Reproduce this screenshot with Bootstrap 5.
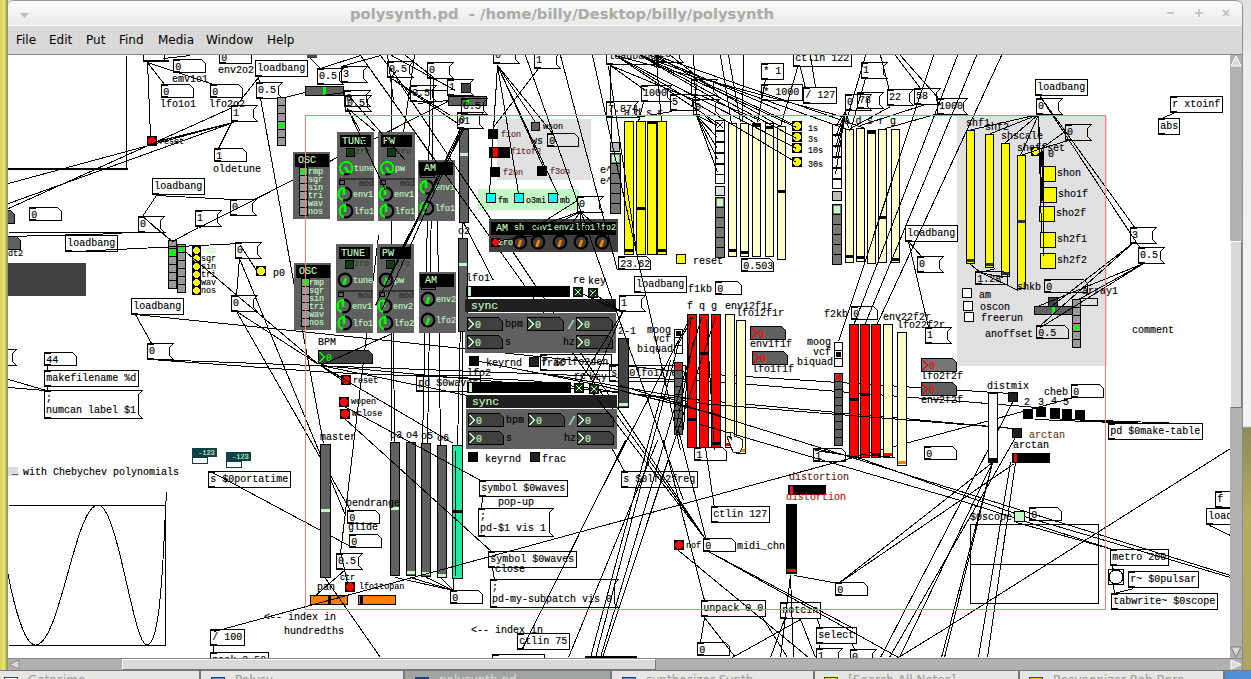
<!DOCTYPE html>
<html lang="en">
<head>
<meta charset="utf-8">
<title>polysynth.pd</title>
<link href="https://cdn.jsdelivr.net/npm/bootstrap@5.3.0/dist/css/bootstrap.min.css" rel="stylesheet">
<style>
html,body{height:100%;overflow:hidden}
body{font-family:"DejaVu Sans",sans-serif;background:#dcdcda}
.desk{height:679px;width:1251px}
.edge-l{width:8px;background:linear-gradient(90deg,#d9d05c,#ebe672 55%,#a49d4a 85%,#8d8d8d)}
.edge-r{width:8px;background:linear-gradient(#e2e2e2 0 35px,#eee 60px,#f4f4f4 426px,#8f8a58 428px,#b5ad62 520px,#aca661)}
.pdwin{width:1235px;height:670px;border-right:1px solid #8c8c8c;border-radius:7px 7px 0 0;background:#dadada}
.titlebar{height:26px;background:linear-gradient(#fbfbfb,#e9e9e7);border-radius:6px 6px 0 0;border-top:1px solid #999;border-bottom:1px solid #fff;color:#aaaaa7}
.titletext{font-size:14.76px;line-height:20px;font-weight:bold;white-space:pre;width:426px;padding-top:1px}
.titleside{width:334px}
.menus{height:29px;background:#d9d9d9;border-bottom:1px solid #888;font-size:12px;color:#000;padding-left:8px}
.patch{display:block;width:1222px;height:603px;background:#fff;flex:none}
.vbar{width:12px;background:#b1b1b1}
.hbar{height:12px;background:#b1b1b1;border-top:1px solid #888}
.thumb{background:#d9d9d9;border:1px solid #777;border-top-color:#fff;border-left-color:#fff}
.tasks{height:9px;font-size:12px;line-height:19px;color:#999;background:#e6e6e4;border-top:1px solid #777}
.task{border-right:2px solid #777;padding-left:10px;height:8px;overflow:hidden;flex:none;white-space:pre}
.task i{display:inline-block;width:14px;height:10px;background:#5b8fcc;border:1px solid #246;margin-right:10px;vertical-align:-3px}
svg text{font-family:"Liberation Mono",monospace;font-size:10px;white-space:pre}
</style>
</head>
<body>
<div class="desk d-flex flex-column">
 <div class="d-flex">
  <div class="edge-l"></div>
  <div class="pdwin d-flex flex-column">
   <div class="titlebar d-flex align-items-center px-2">
    <div class="titleside"><svg width="60" height="20"><path d="M4 9h9l-4.500 5z" fill="#bbb"/></svg></div>
    <span class="titletext">polysynth.pd  - /home/billy/Desktop/billy/polysynth</span>
    <svg class="ms-auto" width="72" height="20" stroke="#bbb" stroke-width="1.500"><path d="M5 10h7M33 10h8M37 6v8M61 7l6 6M67 7l-6 6" fill="none"/></svg>
   </div>
   <div class="menus d-flex align-items-center"><span style="width:33px">File</span><span style="width:37px">Edit</span><span style="width:33px">Put</span><span style="width:39px">Find</span><span style="width:48px">Media</span><span style="width:61px">Window</span><span>Help</span></div>
   <div class="d-flex">
    <svg class="patch" id="patch" viewBox="8 55 1222 603"></svg>
    <div class="vbar d-flex flex-column"><svg width="12" height="12"><path d="M1 11L6 1l5 10z" fill="#d9d9d9" stroke="#fff"/></svg><div style="height:174px"></div><div class="thumb" style="height:167px"></div><div class="flex-grow-1"></div><svg width="12" height="12"><path d="M1 1h10L6 11z" fill="#d9d9d9" stroke="#777"/></svg></div>
   </div>
   <div class="hbar d-flex"><svg width="12" height="11"><path d="M11 1v9L1 5.500z" fill="#d9d9d9" stroke="#888"/></svg><div style="width:102px"></div><div class="thumb" style="width:534px"></div><div class="flex-grow-1"></div><svg width="12" height="11"><path d="M1 1v9l10-4.500z" fill="#d9d9d9" stroke="#fff"/></svg></div>
  </div>
  <div class="edge-r"></div>
 </div>
 <div class="tasks d-flex"><div class="task" style="width:201px;padding-left:4px"><i style="background:#fff"></i>Gatosimo</div><div class="task" style="width:204px"><i></i>Polysy</div><div class="task" style="width:207px;background:#a1a5a1;color:#ddd"><i style="background:#248"></i>polysynth.pd</div><div class="task" style="width:203px"><i></i>synthesizer Synth...</div><div class="task" style="width:205px;padding-left:9px"><i style="background:#ecd96a"></i>[Search All Notes]</div><div class="task" style="width:205px;padding-left:9px"><i style="background:#efcb20"></i>Resynonizer Rob Bpro</div><div style="width:26px;background:#4f90d8"></div></div>
</div>
<script>
const K='#000',G='#c3f7c3',D='#606060',L='#0f0',Y='#fafa00',C='#ffffc8',R='#f00';
let out='';
const esc=s=>String(s).replace(/&/g,'&amp;').replace(/</g,'&lt;');
const rect=(x,y,w,h,f='none',s=K)=>out+=`<rect x="${x+.5}" y="${y+.5}" width="${w}" height="${h}" fill="${f}" stroke="${s}"/>`;
const fill=(x,y,w,h,f)=>out+=`<rect x="${x}" y="${y}" width="${w}" height="${h}" fill="${f}"/>`;
const text=(x,y,s,f=K,z=10)=>out+=`<text x="${x}" y="${y}" fill="${f}" stroke="${f}" stroke-width=".15" style="font-size:${z}px">${esc(s)}</text>`;
const small=(x,y,s,f=K)=>text(x,y,s,f,8.4);
const path=(d,f='none',s=K,w=1)=>out+=`<path d="${d}" fill="${f}" stroke="${s}" stroke-width="${w}"/>`;
const lines=s=>s.trim().split(/\s*;\s*/).filter(Boolean).forEach(l=>path('M'+l.trim().split(' ').map(p=>p.split(',').map(v=>+v+.5).join(' ')).join('L')));
// start an edge fan at one outlet
const fan=(a,s)=>lines(s.split(' ').map(p=>a+' '+p).join(';'));
const ticks=(x,y,h,top=true)=>{if(top)fill(x,y,7,2,K);fill(x,y+h-1,7,2,K)};
const obj=(x,y,w,s)=>{rect(x,y,w,16);ticks(x,y,16,s!='loadbang');text(x+2.3,y+11,s)};
const msg=(x,y,w,s,h=16)=>{path(`M${x+.5} ${y+.5}h${w}l-4 4v${h-8}l4 4h${-w}z`);ticks(x,y,h);s.split('\n').forEach((t,i)=>text(x+2,y+11+i*12,t))};
const num=(x,y,w,s,f='none',c=K)=>{path(`M${x+.5} ${y+.5}h${w-4}l4 4v9h${-w}z`,f);if(f=='none'){ticks(x,y,13);text(x+2.3,y+11,s)}else{path(`M${x+1.5} ${y+2}l5 5l-5 5`,'none',c);text(x+8,y+10.500,s,c)}};
const tgl=(x,y,z,f,inner)=>{rect(x,y,z,z,f);if(inner=='x')path(`M${x+2} ${y+2}l${z-3} ${z-3}m0 ${3-z}l${3-z} ${z-3}`,'none',G)};
const bang=(x,y,z,f)=>{rect(x,y,z,z,K);out+=`<circle cx="${x+z/2+.5}" cy="${y+z/2+.5}" r="${z/2-.6}" fill="${f}"/>`};
const radio=(x,y,w,h,n,on,f,c=L,pad=2)=>{for(let i=0;i<n;i++)rect(x,y+i*h,w,h,f);fill(x+pad,y+on*h+pad,w-2*pad+1,h-2*pad+1,c)};
const vs=(x,y,w,h,f,m,c=K,t=3)=>{rect(x,y,w,h,f);if(m)fill(x+1,m,w-1,t,c)};
const hs=(x,y,w,h,f,m,c,t=3)=>{rect(x,y,w,h,f);fill(m,y+1,t,h-1,c)};
// dial: black ring, value arc (1 = half turn, 2 = nearly full) and a pointer
const knob=(x,y,c,full)=>{out+=`<g shape-rendering="auto" fill="none"><circle cx="${x}" cy="${y}" r="6.300" stroke="#000" stroke-width="2.200"/>`;
if(full==1)out+=`<path d="M${x-2} ${y+6}A6.300 6.300 0 0 1 ${x} ${y-6.3}" stroke="${c}" stroke-width="2.600"/>`;
if(full==2)out+=`<path d="M${x-2} ${y+6}A6.300 6.300 0 1 1 ${x+4} ${y+5}" stroke="${c}" stroke-width="2.300"/>`;
out+=`<path d="${full==2?`M${x-1} ${y-1}L${x+3} ${y+5}`:full==1?`M${x-1} ${y-5}V${y+1}`:`M${x+1} ${y-2}L${x-1.500} ${y+5}`}" stroke="${c}" stroke-width="2.600"/></g>`};
const osc=(x,y,rx)=>{fill(x,y,37,67,D);fill(x+2,y+2,34,13,K);text(x+5,y+11,'OSC',G);radio(rx,y+15,8,8,6,0,'#999');['rmp','sqr','sin','tri','wav','nos'].forEach((s,i)=>small(x+15,y+22+i*8,s,G))};
const mod=(x,y,name,labels)=>{const up=y<200;fill(x,y,37,89,D);fill(x+3,y+3,31,12,K);text(x+5,y+12,name,G);rect(x+9,y+16,8,8,'#123c12');small(x+18,y+22,'zro','#204a20');knob(x+9,y+36,L,up?2:0);small(x+17,y+39,labels[0],G);fill(x+2,y+46,35,2,'#333');rect(x+2,y+48,5,4,D);small(x+22,y+54,'mod','#282828');knob(x+8,y+62,L,1);small(x+16,y+65,labels[1],G);knob(x+9,y+79,L,1);small(x+17,y+82,labels[2],G)};
const am=(x,y,a,b)=>{fill(x,y,37,61,D);fill(x+1,y+2,34,13,K);text(x+6,y+11,'AM',G);rect(x+2,y+15,14,2,D);knob(x+9,y+27,L,y<200?1:0);small(x+17,y+30,a,G);knob(x+9,y+48,L,y<200?1:0);small(x+17,y+51,b,G)};

// grey and green backdrops
fill(957,116,150,250,'#e0e0e0');fill(497,119,94,61,'#e0e0e0');fill(478,189,101,21,G);
fill(8,263,78,33,'#404040');
// wires that run beneath the panels
lines(`360,55 433,158;391,78 391,440;414,55 403,132;387,55 393,100;430,78 422,443;433,78 427,443;437,215 440,445;378,235 340,553;260,98 302,330 323,443;462,240 457,445;393,333 394,442;347,108 360,131;347,108 375,131;199,227 455,97;391,55 455,90;405,55 437,80`);
// left
lines('126,55 126,169');fill(8,168,120,2,K);fill(143,60,26,2,K);rect(143,50,21,10);
num(173,59,32,'0');text(172,82,'emv1o1');num(219,50,32,'0');text(218,73,'env2o2');obj(255,60,52,'loadbang');
num(161,84,32,'0');text(160,107,'lfo1o1');num(210,84,32,'0');text(209,107,'lfo2o2');msg(256,82,26,'0.5');msg(231,105,26,'1');
num(214,148,32,'1');text(213,172,'oldetune');radio(277,97,8,8,6,3,'#999');bang(147,136,9,R);small(159,144,'reset');
obj(152,178,52,'loadbang');num(29,207,32,'0');msg(230,199,26,'0');msg(195,210,26,'1');msg(138,216,26,'0');
num(-12,210,26,'',D);num(-12,236,32,'',D);small(8,256,'dt2');obj(65,235,52,'loadbang');
radio(168,240,8,8,6,1,'#999');radio(177,244,8,8,6,0,'#999');
['rmp','sqr','sin','tri','wav','nos'].forEach((s,i)=>{bang(192,246+i*8,8,Y);small(201,253+i*8,s,i?K:G)});
msg(235,242,26,'0');bang(256,266,9,Y);text(273,276,'p0');msg(231,295,26,'0');obj(131,298,52,'loadbang');msg(147,343,26,'0');
msg(-10,349,26,'');num(44,352,32,'44');obj(44,370,94,'makefilename %d');msg(44,390,98,';\nnumcan label $1',28);
fill(192,448,25,9,'#104048');text(198,455,'-123',G,7);rect(192,457,15,6,'#fff','#104048');fill(226,452,25,9,'#104048');text(232,459,'-123',G,7);rect(226,461,15,6,'#fff','#104048');
fill(8,467,10,9,'#ddd');text(12,474,'_');text(23,475,'with Chebychev polynomials');obj(208,471,82,'s $0portatime');
lines('8,505 165,505 165,645 8,645');
path('M8 574C15 610 25 645 35.500 645C60 645 75 505 98 505C118 505 133 645 147 645C158 645 162 590 165 520L166.500 492');
lines(`8,183 233,122 8,203;8,208 232,107;157,141 233,122;147,61 150,136;147,62 164,84;147,62 213,84;163,58 190,55;258,77 236,105;231,122 218,148;258,77 259,82;285,97 320,88;156,195 142,216;156,195 233,199;142,216 172,241;152,225 172,241;198,227 172,241;8,232 165,232;8,236 122,233;75,251 240,243;239,258 236,295;239,258 345,515;236,311 350,510;236,311 318,364;186,252 318,364;240,245 256,270;135,314 151,343;135,314 310,332 698,373 1010,393;150,359 530,373 700,380 1037,407;150,359 330,372 530,380 720,405;8,379 46,390;8,387 44,390;47,365 47,370;47,386 47,390;212,472 350,546`);
// oscillator modules
osc(293,152,299);mod(337,132,'TUNE',['tune','env1','lfo1']);mod(378,132,'PW',['pw','env1','lfo1']);am(418,160,'env1','lfo1');
osc(294,263,301);mod(336,244,'TUNE',['tune','env1','lfo1']);mod(377,244,'PW',['pw','env2','lfo2']);am(419,272,'env2','lfo2');
fill(307,50,10,8,'#444');msg(317,68,26,'0.5');msg(341,66,26,'3');hs(305,86,38,9,D,323,L);msg(344,90,26,'0');msg(345,95,26,'0.5');
msg(387,61,26,'0.5');msg(427,62,26,'0');msg(410,85,26,'0.5');msg(447,79,26,'1');tgl(461,83,9,'#444');hs(448,96,38,9,D,466,L);msg(461,98,26,'0.5');msg(457,112,26,'0');text(458,124,'o1');
vs(459,129,9,93,D,153,G);text(458,234,'o2');vs(458,238,9,93,D,263,G);msg(493,47,26,'0');msg(534,52,26,'1');
text(318,345,'BPM');num(318,350,54,'0','#404040',L);
bang(341,375,9,R);small(353,383,'reset');bang(339,397,9,R);small(351,404,'wopen');bang(340,409,9,R);small(352,416,'wclose');obj(416,375,64,'pd $0waves');
text(320,440,'master');vs(320,444,10,133,D,509,G);
vs(390,442,9,133,D,507,G);vs(406,442,9,133,D,571,G);vs(421,443,9,133,D,572,G);vs(437,445,9,132,D,574,G);vs(452,445,10,133,'#20eaa8',510,K);
text(390,438,'o3');text(406,438,'o4');text(421,439,'o5');text(437,441,'o6');
text(346,506,'bendrange');num(347,510,32,'0');text(348,530,'glide');num(349,534,32,'0');msg(336,553,26,'0.5');small(340,580,'ctr');bang(345,582,9,R);small(359,589,'lfo1topan');text(317,590,'pan');
hs(310,595,37,9,'#ff8000',328,K);hs(358,595,37,9,'#ff8000',360,K);num(450,590,32,'0');
text(264,620,'<-- index in');text(284,634,'hundredths');obj(210,629,34,'/ 100');obj(210,652,58,'pack 0 50');lines('213,645 213,652');
lines(`310,58 320,68 360,55;341,66 380,55;348,95 405,160;347,108 385,190;391,78 460,125;391,78 450,115;410,95 380,55;415,90 447,90;320,95 345,92;396,78 706,540;360,55 706,540;396,70 390,78;460,128 375,305;462,128 381,310;464,128 396,258;458,135 388,280;462,222 462,238;463,222 493,280;418,103 448,100;325,578 380,657;345,569 314,596;341,555 347,583`);
fan('320,365','392,333 345,379 467,395 453,443 345,382 1013,428');lines('344,406 482,481;344,418 492,552;214,631 1037,407;462,330 462,445;455,450 455,575');
fan('453,590','395,577 410,577 426,577 441,578 453,578');
// filter switches
const br='#5b2b2b';tgl(488,129,9,K);small(501,137,'f1on',br);hs(489,147,20,10,K,493,R,5);small(511,154,'f1tof2',br);tgl(490,167,9,K);small(503,175,'f2on',br);tgl(537,166,9,K);small(550,174,'f3on',br);tgl(531,122,8,D);small(543,129,'wson');text(531,144,'ws');num(547,133,31,'0');
[[486,'fm'],[514,'o3mi'],[548,'mb']].forEach(([x,s])=>{tgl(x,193,9,'#00ffff');small(x+12,203,s)});msg(577,196,26,'0');
fill(489,219,129,33,'#404040');fill(491,222,125,13,K);text(496,231,'AM',G);small(514,230,'sh',G);small(532,230,'env1',G);small(554,230,'env2',G);small(575,230,'lfo1',G);small(596,230,'lfo2',G);
[520,538,560,581,602].forEach(x=>knob(x,242,'#ff8000',0));bang(491,238,8,R);small(498,245,'zro',G);
text(466,281,'lfo1');
[[466,286],[467,382]].forEach(([x,y],i)=>{hs(x,y,103,10,K,x+2,G);fill(x-1,y+13,151,13,'#202020');text(x+5,y+23,'sync',G,11.3);fill(x-1,y+27,151,40,D);
[[1,31,35],[61,31,36],[110,31,36],[1,49,35],[110,49,36]].forEach(([a,b,w])=>num(x+a,y+b,w,'0','#404040',G));text(x+39,y+41,'bpm');text(x+101,y+43,'/',G,13);text(x+39,y+59,'s');text(x+97,y+59,'hz');
text(x+107,y-3,'re');text(x+122,y-2,'key');tgl(x+107,y+1,9,'#133313','x');tgl(x+122,y+2,9,'#133313','x')});
tgl(469,356,9,K);text(486,366,'keyrnd');tgl(529,357,9,'#222');text(541,366,'frac');text(467,376,'lfo2');tgl(468,452,9,K);text(485,462,'keyrnd');tgl(530,452,9,'#222');text(542,462,'frac');
obj(540,354,71,'r $0lfo2den');obj(609,365,76,'s $0lfo1freq');text(618,334,'2-1');vs(618,338,10,69,'#444',403,G);msg(619,295,26,'1');obj(634,276,52,'loadbang');
// envelope sliders
vs(624,121,9,133,Y,249);vs(636,121,9,133,Y,207);vs(647,121,9,133,Y,121);vs(657,121,9,133,Y,249);['a','d','s','r'].forEach((s,i)=>text(624+i*11,116,s));
text(600,173,'e^2');text(600,184,'e^4');tgl(610,142,9,'#bbb');radio(610,153,10,10,6,0,'#777',G);num(618,256,32,'23.62');tgl(676,254,9,Y);text(693,264,'reset');
obj(606,48,52,'loadbang');msg(657,46,26,'20');msg(641,85,30,'1000');msg(670,94,26,'5');msg(606,101,32,'7.874');msg(691,79,26,'1');msg(693,99,26,'0');
for(let i=0;i<5;i++){rect(715,120+i*11,9,10,'#fff');rect(832,124+i*11,9,10,'#fff')}path('M717 122l6 6m0-6l-6 6');tgl(715,174,9,'#fff');tgl(715,186,9,'#ddd');radio(715,197,9,10,6,0,'#777',G);tgl(832,179,9,'#fff');tgl(832,191,9,'#bbb');radio(832,204,9,10,6,0,'#777',G);
[[728,123,249],[740,123,251],[752,123,124],[765,123,126],[777,126,190],[845,129,255],[856,128,256],[867,130,131],[878,129,216],[891,129,258]].forEach(([x,y,m])=>vs(x,y,8,133,C,m));
[[121,'1s'],[132,'3s'],[143,'10s'],[157,'30s']].forEach(([y,s])=>{bang(792,y,9,Y);small(808,y+10,s)});
['a','d','s','r','g'].forEach((s,i)=>text(844+i*11.500,124,s));
obj(761,63,22,'* 1');obj(761,84,41,'* 1000');obj(803,87,33,'/ 127');obj(793,50,58,'ctlin 122');msg(861,62,26,'1');msg(845,94,26,'0');msg(857,92,26,'78');msg(887,89,26,'22');msg(914,88,26,'58');msg(937,98,30,'1000');
num(741,258,32,'0.503');obj(905,225,52,'loadbang');msg(917,256,26,'0');
text(688,292,'f1kb');num(715,281,26,'0');text(824,317,'f2kb');num(851,306,26,'0');
text(647,333,'moog');text(653,342,'vcf');text(637,352,'biquad');radio(674,329,8,8,3,0,'#fff',K);radio(674,362,8,8,9,0,D,R);
['f','q','g'].forEach((s,i)=>{text(687+i*12,309,s);vs(687+i*12,314,9,133,R,[418,352,442][i])});vs(725,314,9,133,C,443,R);vs(736,320,9,133,C,449,'#ff8000');text(725,309,'env12f1r');text(736,316,'lfo12f1r');
num(750,326,35,'0',D,R);text(750,347,'env1f1f');num(752,351,35,'0',D,R);text(752,372,'lfo1f1f');
text(807,345,'moog');text(813,355,'vcf');text(797,365,'biquad');radio(834,342,8,8,3,1,'#fff',K);radio(834,373,8,8,9,0,D,R);
[0,1,2].forEach(i=>vs(849+i*11,324,9,133,R,[398,393,453][i]));vs(883,324,9,133,C,453,R);vs(897,332,9,133,C,461,'#ff8000');text(883,320,'env22f2r');text(897,328,'lfo22f2r');
num(813,448,32,'1');num(694,447,32,'1');num(921,358,35,'0','#777',R);text(921,379,'lfo2f2f');num(921,382,35,'0',D,R);text(921,403,'env2f2f');msg(925,327,26,'1');num(924,446,32,'0');
fan('497,65','493,130 489,193 518,193 543,167 535,122 553,134 558,195');
fan('580,211','520,232 540,232 565,232 581,232 602,232');
lines('538,68 492,128;577,200 537,225;500,240 535,235');
fan('610,65','611,142 645,90 695,100');
fan('640,55','757,124 796,127 796,138 850,130');fan('615,55','796,148 796,162 719,124 845,117');fan('655,55','780,126 865,128');
fan('696,115','717,125 717,137 717,148 717,159 717,172');fan('845,111','835,126 835,137 835,148 835,159 835,174 848,128');
lines(`525,55 683,500;560,55 617,270;592,55 680,450;608,66 636,250;655,50 661,121;643,102 638,121;635,117 672,111;693,55 696,115;693,95 696,99;670,55 715,90;650,55 780,110;700,80 793,124;700,95 760,120;933,55 838,341;957,55 853,325;976,55 864,325;1001,55 876,325;908,241 921,256;908,241 928,327;865,78 850,130;925,104 860,125;938,113 885,128;800,67 805,88;797,67 780,126;765,79 757,122;720,55 731,123;743,55 742,122;728,55 740,122;895,55 920,88;880,55 889,90;900,55 940,100;865,55 846,120;810,55 815,87;704,115 715,125;890,106 850,128`);
fan('622,312','578,383 592,383 579,292 593,293');
lines(`469,359 600,385 720,415;543,373 700,400;690,317 603,485;678,343 595,657;701,317 600,657;715,317 602,657;670,360 590,657;690,320 683,430;706,320 714,450;678,343 692,317;625,440 522,648;657,440 568,657;592,392 706,540;612,449 624,471;693,340 675,430;663,440 704,600;678,430 706,540;705,447 714,508;700,403 1013,428;620,385 1230,575;700,424 960,500 1112,549;818,449 860,458 1020,515 1230,577;815,450 860,457;860,454 895,457`);
// lower centre
obj(479,480,88,'symbol $0waves');text(498,505,'pop-up');msg(478,508,75,';\npd-$1 vis 1',28);obj(488,551,88,'symbol $0waves');text(495,572,'close');msg(490,579,128,';\npd-my-subpatch vis 0',28);lines('482,497 481,508;492,568 494,579');
text(471,633,'<-- index in');obj(517,633,52,'ctlin 75');obj(492,654,52,'');fill(585,656,52,2,K);obj(621,471,76,'s $0lfo2freq');obj(711,506,58,'ctlin 127');bang(674,540,9,R);small(686,548,'nof');num(703,538,32,'0');text(737,549,'midi_chn');
text(789,480,'distortion','#602020');hs(788,485,37,9,K,790,'#ff0050');text(786,500,'distortion',R);vs(786,504,10,69,K,569,R);
obj(701,600,64,'unpack 0 0');obj(780,602,40,'notein');obj(816,627,40,'select');msg(816,648,26,'1');msg(850,649,26,'0');num(697,642,32,'0');num(835,582,32,'0');
lines(`708,551 853,628;708,551 898,657;678,550 808,657;704,617 700,642;704,617 735,657;762,617 787,657;784,619 770,657;800,619 732,657;800,619 815,657;817,619 820,628;790,575 780,657;790,575 793,657;794,575 838,583 992,462;838,583 1014,463;819,644 819,648;852,644 854,649;898,657 945,628 1230,448`);
fan('1012,402','880,657');fan('1015,437','889,657');fan('992,462','941,657 944,657 899,657');lines('1010,462 978,657;1015,462 987,657');
// right
[[966,130,259],[985,134,263],[1001,143,272],[1017,155,220]].forEach(([x,y,m])=>vs(x,y,8,133,Y,m,'#333'));
text(966,126,'shf1');text(985,130,'shf2');text(1001,139,'shscale');text(1017,151,'shoffset');text(1048,157,'0');bang(1031,147,8,Y);
[[1040,166,'shon'],[1041,187,'sho1f'],[1039,206,'sho2f'],[1040,232,'sh2f1'],[1040,253,'sh2f2']].forEach(([x,y,s])=>{tgl(x,y,15,Y);text(x+17,y+10,s)});
obj(1035,79,52,'loadbang');msg(1036,98,26,'0');msg(1065,124,26,'0');obj(1170,96,52,'r xtoinf');obj(1158,118,21,'abs');msg(1130,227,26,'3');msg(1138,247,26,'0.5');
num(975,271,32,'1.28');text(1017,290,'shkb');num(1044,279,43,'0');text(1082,294,'array1');tgl(962,288,9,'#fff');tgl(963,301,9,'#fff');tgl(964,312,9,'#fff');text(979,298,'am');text(980,310,'oscon');text(981,321,'freerun');hs(1034,306,38,8,D,1052,L);tgl(1048,297,9,'#444');radio(1072,299,8,8,6,3,'#999');rect(1080,298,17,7);text(985,337,'anoffset');num(1036,325,32,'0.5');text(1132,333,'comment');
text(987,389,'distmix');vs(988,393,9,69,'#f8f8f8',458,K,4);tgl(1008,392,9,'#222');text(1044,395,'cheb');num(1071,384,32,'0');[[1024,405,'2'],[1038,405,'3'],[1051,404,'4'],[1063,405,'5']].forEach(([x,y,s])=>text(x,y,s));[[1023,409],[1036,407],[1050,408],[1062,409],[1075,410]].forEach(([x,y])=>tgl(x,y,9,K));obj(1108,423,94,'pd $0make-table');tgl(1012,428,9,'#222');text(1029,438,'arctan','#604020');text(1013,448,'arctan');hs(1012,453,37,9,K,1014,R);
text(970,520,'$0scope');tgl(1014,511,10,G);num(1029,507,32,'0');rect(970,524,128,79);lines('970,564 1098,564');obj(1110,549,58,'metro 200');rect(1108,569,15,15);out+='<circle cx="1116" cy="577" r="7" fill="#fff" stroke="#000"/>';obj(1128,571,70,'r~ $0pulsar');obj(1111,593,106,'tabwrite~ $0scope');obj(1215,491,40,'f 1');obj(1206,508,52,'loadbang');
fan('1038,114','968,130 988,134 1004,143 1020,155 1041,188 1041,232');fan('1041,148','1066,130 1068,140 1041,166 1020,155');
fan('1039,95','1135,228 1140,248');lines('1043,150 1043,255;1042,150 1042,200;1175,112 1161,118;970,264 980,272 1018,290;980,272 995,268;980,272 1003,277');
fan('1132,243','1040,325 1052,305');fan('1143,263','1037,306 1040,327 1078,299');lines('1073,397 1037,407;1035,419 1140,423;1050,418 1147,423;1070,419 1183,423;1112,566 1113,570;1113,585 1114,593 1133,588;1016,522 1112,549;1209,525 1230,535');
// graph-on-parent frame
rect(305,115,800,494,'none','#f08080');
// hand pointer
path('M727 437q2-2 5 3l-2-7q2-2 4 1l1 3q2-1 3 1q2-1 3 1q2 0 2 3l-1 6l-2 4h-7z','#fff','#222');
document.getElementById('patch').innerHTML='<g shape-rendering="crispEdges">'+out+'</g>';
</script>
<script src="https://cdn.jsdelivr.net/npm/bootstrap@5.3.0/dist/js/bootstrap.bundle.min.js"></script>
</body>
</html>
